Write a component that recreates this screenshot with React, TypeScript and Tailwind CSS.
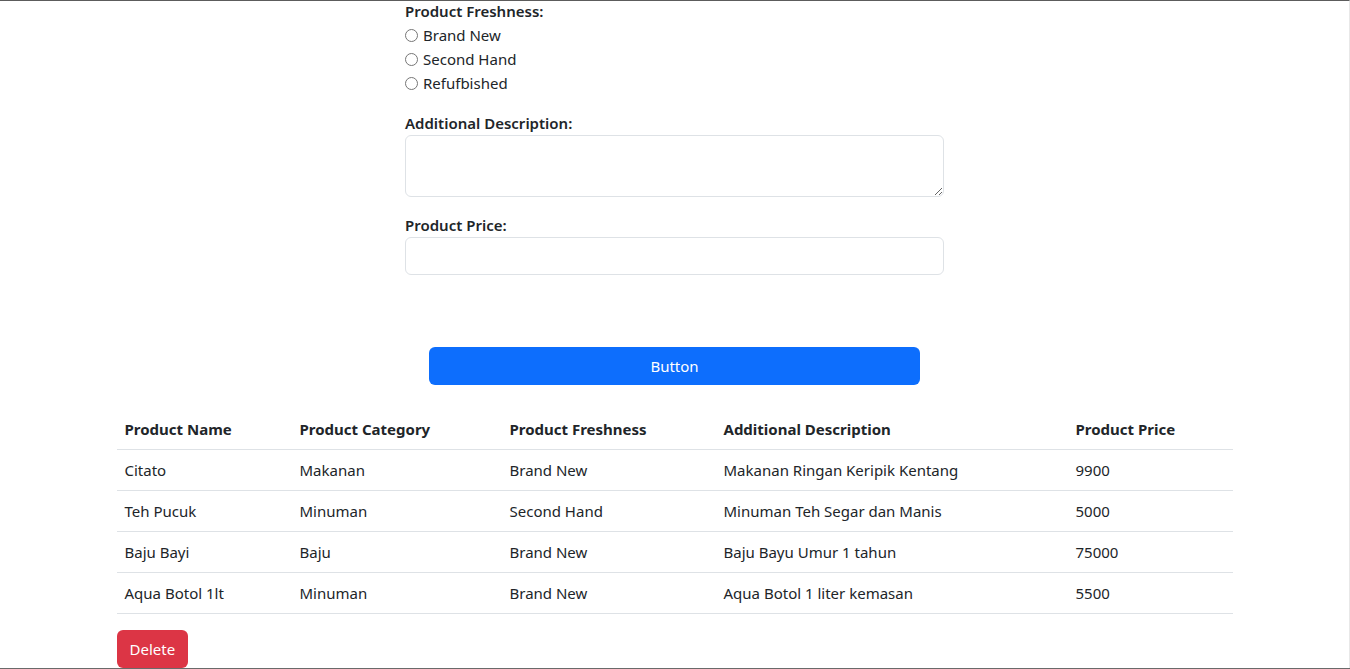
const products = [
  { name: 'Citato', category: 'Makanan', freshness: 'Brand New', desc: 'Makanan Ringan Keripik Kentang', price: '9900' },
  { name: 'Teh Pucuk', category: 'Minuman', freshness: 'Second Hand', desc: 'Minuman Teh Segar dan Manis', price: '5000' },
  { name: 'Baju Bayi', category: 'Baju', freshness: 'Brand New', desc: 'Baju Bayu Umur 1 tahun', price: '75000' },
  { name: 'Aqua Botol 1lt', category: 'Minuman', freshness: 'Brand New', desc: 'Aqua Botol 1 liter kemasan', price: '5500' },
];

const freshness = ['Brand New', 'Second Hand', 'Refufbished'];

export default function App() {
  return (
    <div className="min-h-screen border-t border-r border-t-[#5c5c5c] border-r-[#e8e8e8] bg-white font-['Segoe_UI','Noto_Sans',sans-serif] text-[15px] leading-6 text-[#212529]">
      {/* Form */}
      <div className="mx-auto -mt-0.5 w-[539px]">
        <p className="font-semibold">Product Freshness:</p>
        <div className="flex flex-col">
          {freshness.map((f) => (
            <label key={f} className="flex items-center gap-[5px]">
              <input
                type="radio"
                name="freshness"
                className="h-[13px] w-[13px] appearance-none rounded-full border border-[#767676] bg-white"
              />
              <span>{f}</span>
            </label>
          ))}
        </div>

        <label className="mt-4 block font-semibold">Additional Description:</label>
        <textarea
          rows={2}
          className="block h-[62px] w-full rounded-md border border-[#dee2e6] px-3 py-1.5"
        />

        <label className="mt-4 block font-semibold">Product Price:</label>
        <input
          type="text"
          className="block h-[38px] w-full rounded-md border border-[#dee2e6] px-3 py-1.5"
        />
      </div>

      <div className="mx-auto mt-[72px] w-[491px]">
        <button className="h-[38px] w-full rounded-md bg-[#0d6efd] text-white">Button</button>
      </div>

      {/* Table */}
      <div className="mx-auto mt-6 w-[1116px]">
        <table className="mb-4 w-full border-collapse text-left">
          <thead>
            <tr className="border-b border-[#dee2e6]">
              <th className="w-[175px] p-2 font-bold">Product Name</th>
              <th className="w-[210px] p-2 font-bold">Product Category</th>
              <th className="w-[214px] p-2 font-bold">Product Freshness</th>
              <th className="w-[352px] p-2 font-bold">Additional Description</th>
              <th className="p-2 font-bold">Product Price</th>
            </tr>
          </thead>
          <tbody>
            {products.map((p) => (
              <tr key={p.name} className="border-b border-[#dee2e6]">
                <td className="p-2">{p.name}</td>
                <td className="p-2">{p.category}</td>
                <td className="p-2">{p.freshness}</td>
                <td className="p-2">{p.desc}</td>
                <td className="p-2">{p.price}</td>
              </tr>
            ))}
          </tbody>
        </table>
        <button className="h-[38px] rounded-md bg-[#dc3545] px-[13px] text-white">Delete</button>
      </div>

      <div className="fixed bottom-0 left-0 right-0 h-px bg-[#6a6a6a]" />
    </div>
  );
}
